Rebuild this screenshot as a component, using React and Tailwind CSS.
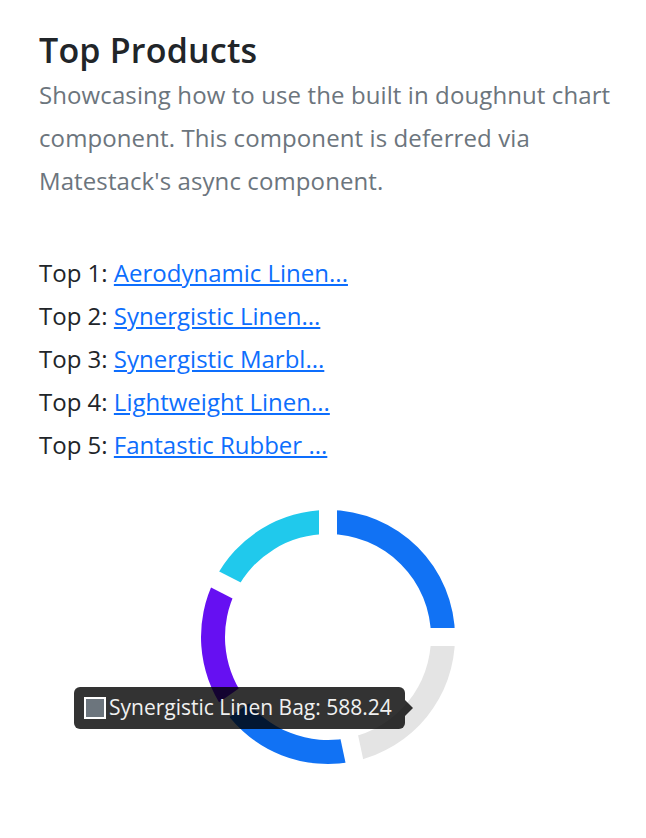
const products = [
  { rank: 1, name: 'Aerodynamic Linen...' },
  { rank: 2, name: 'Synergistic Linen...' },
  { rank: 3, name: 'Synergistic Marbl...' },
  { rank: 4, name: 'Lightweight Linen...' },
  { rank: 5, name: 'Fantastic Rubber ...' },
];

// angles in degrees, clockwise from 12 o'clock
const segments = [
  { from: 0, to: 90, color: '#1172f4' },
  { from: 90, to: 168, color: '#e4e4e4' },
  { from: 168, to: 235, color: '#1172f4' },
  { from: 235, to: 297, color: '#6610f2' },
  { from: 297, to: 360, color: '#20c9ec' },
];

const CX = 130;
const CY = 130;
const R_OUT = 127;
const R_IN = 103;

function pt(r, deg) {
  const a = (deg * Math.PI) / 180;
  return [CX + r * Math.sin(a), CY - r * Math.cos(a)];
}

function arcPath(from, to) {
  const large = to - from > 180 ? 1 : 0;
  const [x1, y1] = pt(R_OUT, from);
  const [x2, y2] = pt(R_OUT, to);
  const [x3, y3] = pt(R_IN, to);
  const [x4, y4] = pt(R_IN, from);
  return `M${x1} ${y1} A${R_OUT} ${R_OUT} 0 ${large} 1 ${x2} ${y2} L${x3} ${y3} A${R_IN} ${R_IN} 0 ${large} 0 ${x4} ${y4} Z`;
}

function Doughnut() {
  return (
    <svg width="260" height="260" viewBox="0 0 260 260">
      {segments.map((s, i) => (
        <path key={i} d={arcPath(s.from, s.to)} fill={s.color} />
      ))}
      {segments.map((s, i) => {
        const [x, y] = pt(R_OUT + 4, s.from);
        return <line key={i} x1={CX} y1={CY} x2={x} y2={y} stroke="#fff" strokeWidth="18" />;
      })}
    </svg>
  );
}

export default function App() {
  return (
    <div className="min-h-[838px] bg-white pl-[39px] pr-[20px] pt-[27px]" style={{ fontFamily: '"Open Sans", "Noto Sans", sans-serif' }}>
      {/* Header */}
      <h1 className="text-[34px] font-semibold leading-[46px] tracking-[0.2px] text-[#212529]">Top Products</h1>
      <p className="text-[24px] leading-[43px] text-[#6c757d] tracking-[0.1px]">
        Showcasing how to use the built in doughnut chart component. This component is deferred via Matestack's async component.
      </p>

      {/* List */}
      <ul className="mt-[49px] text-[24px] leading-[43px] text-[#212529]">
        {products.map((p) => (
          <li key={p.rank}>
            Top {p.rank}: <a href="#" className="text-[#0d6efd] underline">{p.name}</a>
          </li>
        ))}
      </ul>

      {/* Chart */}
      <div className="relative mt-[41px] h-[280px]">
        <div className="ml-[159px] w-[260px]">
          <Doughnut />
        </div>

        {/* Tooltip */}
        <div className="absolute left-[35px] top-[180px] flex h-[42px] w-[331px] items-center rounded-[6px] bg-black/80 pl-[10px] text-[21px] text-[#f0f0f0]">
          <span className="mr-[3px] inline-block h-[22px] w-[22px] shrink-0 border-2 border-white bg-[#6c757d]"></span>
          <span className="whitespace-nowrap">Synergistic Linen Bag: 588.24</span>
          <span className="absolute right-[-8px] top-[13px] h-0 w-0 border-y-[8px] border-l-[8px] border-y-transparent border-l-black/80"></span>
        </div>
      </div>
    </div>
  );
}
